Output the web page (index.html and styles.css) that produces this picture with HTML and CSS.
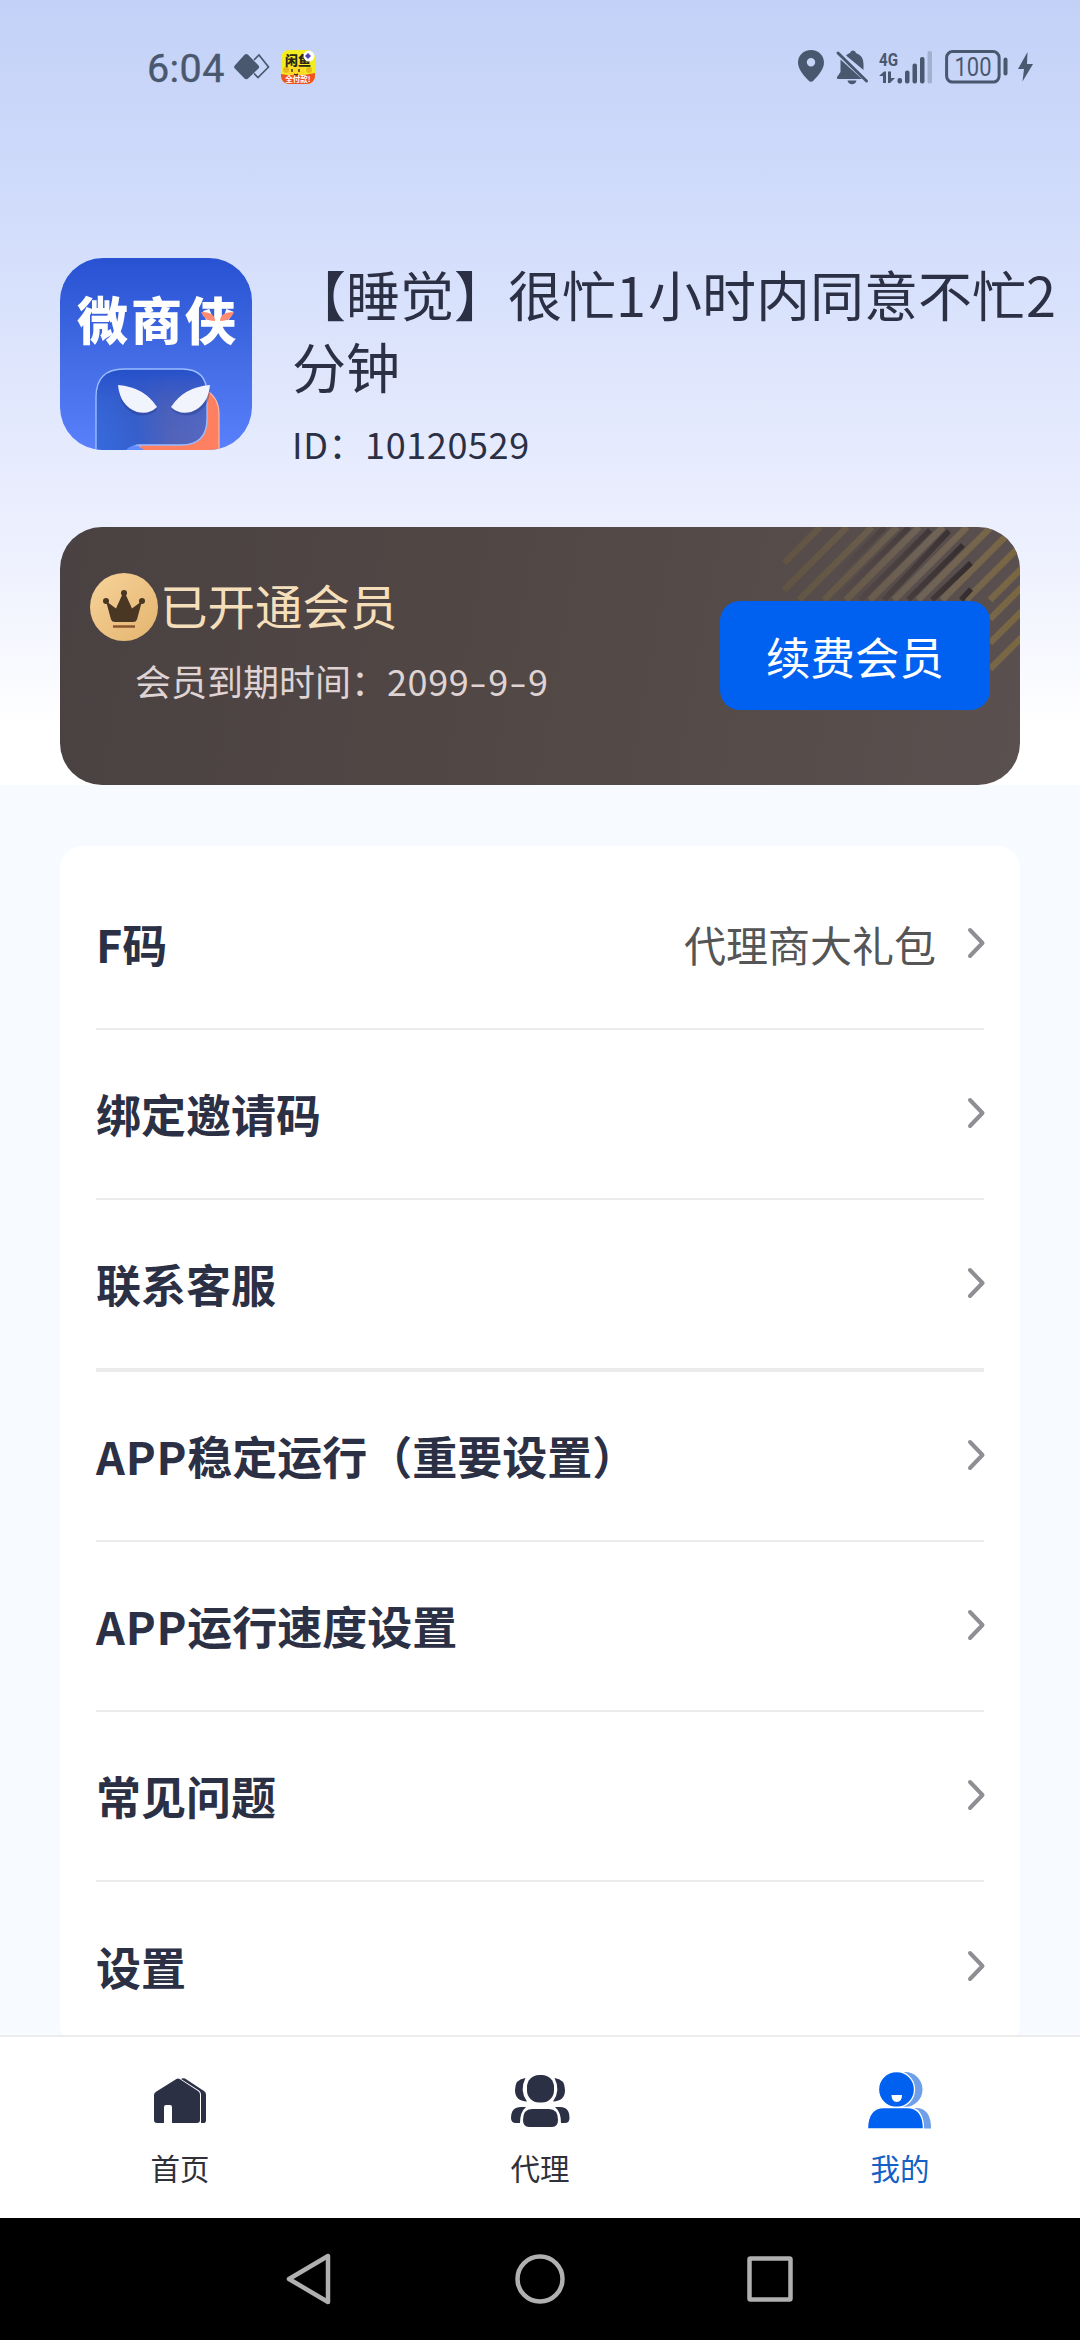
FILE: index.html
```html
<!DOCTYPE html>
<html lang="zh-CN">
<head>
<meta charset="utf-8">
<title>我的</title>
<link rel="stylesheet" href="styles.css">
</head>
<body>
<div class="screen">
  <main class="content">
    <section class="hero">
      <header class="status">
        <div class="status-left">
          <span class="clock">6:04</span>
          <svg class="diamonds" width="36" height="28" viewBox="0 0 36 28"><path d="M20 7l5-5 9.500 12L24 24.500l-4-4" fill="none" stroke="#4a586f" stroke-width="1.700"/><path d="M10.500 1.800q1.800-1.600 3.600 0L24.500 12.500q1.400 1.500 0 3L14.100 25.500q-1.800 1.600-3.600 0L.8 15.500q-1.400-1.500 0-3z" fill="#4a586f"/></svg>
          <svg class="appicon" width="34" height="34" viewBox="0 0 34 34">
            <defs><clipPath id="ai"><rect width="34" height="34" rx="8"/></clipPath></defs>
            <g clip-path="url(#ai)"><rect width="34" height="34" fill="#f3ec20"/><ellipse cx="15" cy="21" rx="9" ry="7" fill="#ffd928"/><circle cx="5" cy="20" r="3" fill="#e9b81c"/><circle cx="28" cy="20" r="3" fill="#e9b81c"/><path d="M0 24q17 3 34-1v11H0z" fill="#ee5422"/>
            <text x="17" y="15" text-anchor="middle" class="ai-a">闲鱼</text><text x="17" y="32" text-anchor="middle" class="ai-b">全付款!</text>
            <path d="M11 19v3M18 19v3M13 24q2 1.500 4 0" stroke="#3c3010" stroke-width="1.400" fill="none"/><circle cx="28" cy="6" r="5.500" fill="#fff"/><path d="M27 3l3 3-3 3-3-3z" fill="#5140b4"/></g>
          </svg>
        </div>
        <div class="status-right">
          <svg width="26" height="32" viewBox="0 0 26 32"><path fill-rule="evenodd" d="M13 0C5.500 0 0 5.500 0 12.500 0 19 5.500 25.500 10.500 30.500q2.500 2.500 5 0C20.500 25.500 26 19 26 12.500 26 5.500 20.500 0 13 0zm0 8a4.200 4.200 0 1 1 0 8.400 4.200 4.200 0 0 1 0-8.400z" fill="#4a586f"/></svg>
          <svg class="bell" width="33" height="35" viewBox="0 0 33 35"><g fill="#4a586f"><path d="M4.500 9.500L26 29H2.500Q0 29 1.200 26.800L4.500 22z"/><path d="M10 5.500Q12.500 3.300 14 3q.5-2.500 3-2.500T20 3q7.500 2.500 7.500 11v6z"/><path d="M11.500 30.500h9q-1 3.800-4.500 3.800t-4.500-3.800z"/></g><path d="M2 3l28.500 28" stroke="#4a586f" stroke-width="3" stroke-linecap="round"/></svg>
          <svg class="signal" width="54" height="36" viewBox="0 0 54 36"><text x="0" y="16" class="net" textLength="19" lengthAdjust="spacingAndGlyphs">4G</text><g fill="#4a586f"><path d="M0 26l5-4.500h2V33H4v-7zM9 21.500h3V28h4l-5 5H9z"/><rect x="18.500" y="28" width="4.500" height="5.500" rx="2"/><rect x="26" y="20.500" width="4.500" height="13" rx="2"/><rect x="33.500" y="13.500" width="4.500" height="20" rx="2"/><rect x="41" y="7" width="4.500" height="26.500" rx="2"/></g><rect x="48.500" y="1" width="4.500" height="32.500" rx="2" fill="#a2b0cf"/></svg>
          <svg class="battery" width="64" height="34" viewBox="0 0 64 34"><rect x="1.600" y="1.600" width="52.500" height="30.500" rx="6" fill="none" stroke="#4a586f" stroke-width="3"/><path d="M60.500 9.500v14" stroke="#4a586f" stroke-width="4" stroke-linecap="round"/><text x="28" y="25.500" text-anchor="middle" class="pct" textLength="37" lengthAdjust="spacingAndGlyphs">100</text></svg>
          <svg class="bolt" width="15" height="30" viewBox="0 0 15 30"><path d="M9.500 0L0 17h6L4.500 29.500 15 12H9z" fill="#4a586f"/></svg>
        </div>
      </header>

      <div class="profile">
        <svg class="avatar" width="192" height="192" viewBox="0 0 192 192">
          <defs>
            <linearGradient id="bg" x1="0" y1="0" x2="0" y2="1"><stop offset="0" stop-color="#2852d2"/><stop offset=".55" stop-color="#446de6"/><stop offset="1" stop-color="#5a80fc"/></linearGradient>
            <linearGradient id="face" x1="0" y1=".1" x2="1" y2="0"><stop offset="0" stop-color="#3568dc"/><stop offset=".3" stop-color="#345fcd"/><stop offset=".6" stop-color="#5263b8"/><stop offset="1" stop-color="#586ac6"/></linearGradient>
            <linearGradient id="topface" x1="0" y1="0" x2="0" y2="1"><stop offset="0" stop-color="#2450cc"/><stop offset=".45" stop-color="#3458c4" stop-opacity=".3"/><stop offset="1" stop-color="#5264bc" stop-opacity="0"/></linearGradient>
            <clipPath id="av"><rect width="192" height="192" rx="43"/></clipPath>
          </defs>
          <g clip-path="url(#av)">
            <rect width="192" height="192" fill="url(#bg)"/>
            <path d="M146 132q13 8 13 24v37H80v-8l50-3z" fill="#ff8060" stroke="#ffb9aa" stroke-width="1.200"/>
            <path d="M36 194v-55q0-28 28-28h58q25 0 25 25v25q0 26-26 26H80q-8 0-12 7z" fill="url(#face)"/>
            <path d="M36 194v-55q0-28 28-28h58q25 0 25 25v25q0 26-26 26H80q-8 0-12 7z" fill="url(#topface)" stroke="#9bbcff" stroke-width="1.400"/>
            <path d="M66 192q8-9 18 0z" fill="#628cff"/>
            <g fill="#26388a" opacity=".4"><path d="M59 130q28 2 38 22-7 7-20 5-18-6-18-27z"/><path d="M150 130q-28 2-38 22 7 7 20 5 18-6 18-27z"/></g>
            <g fill="#f1f4fc"><path d="M58 127q26 2 39 22-8 8-20 5-17-6-19-27z"/><path d="M150 127q-26 2-39 22 8 8 20 5 17-6 19-27z"/></g>
            <text x="96.500" y="82" text-anchor="middle" class="brand" textLength="159">微商侠</text>
            <path d="M141 54q14 0 14 9-11 0-14-9zM174 54q-14 0-14 9 11 0 14-9z" fill="#ff8b70"/>
          </g>
        </svg>
        <div class="who">
          <h1 class="name">【睡觉】很忙<span class="one">1</span>小时内同意不忙2<br>分钟</h1>
          <p class="uid">ID：10120529</p>
        </div>
      </div>

      <div class="vip">
        <svg class="stripes" width="236" height="150" viewBox="0 0 236 150">
          <defs><linearGradient id="sg" gradientUnits="userSpaceOnUse" x1="0" y1="0" x2="236" y2="0"><stop offset="0" stop-color="#716038" stop-opacity=".4"/><stop offset=".6" stop-color="#75685a" stop-opacity=".8"/><stop offset="1" stop-color="#7a6740"/></linearGradient>
          <linearGradient id="dk" gradientUnits="userSpaceOnUse" x1="50" y1="0" x2="188" y2="0"><stop offset="0" stop-color="#3e3030" stop-opacity="0"/><stop offset="1" stop-color="#342c2e"/></linearGradient></defs>
          <path stroke="url(#sg)" stroke-width="6.500" fill="none" d="M0 36L36 0M0 63L63 0M15 73L88 0M40 73L113 0M62 73L135 0M86 73L159 0M110 73L183 0M134 73L207 0M158 73L231 0M182 73L240 15M206 73L240 39M206 92L240 58M206 116L240 82M206 142L240 108"/>
          <path stroke="url(#dk)" stroke-width="5.500" fill="none" d="M28 73L101 0M52 73L125 0M76 73L146 3M100 73L165 4M124 73L179 18M148 73L187 36M177 73L187 62"/>
        </svg>
        <div class="vip-info">
          <div class="vip-title"><svg width="68" height="68" viewBox="0 0 68 68"><defs><linearGradient id="gold" x1="0" y1="0" x2="1" y2="1"><stop offset="0" stop-color="#f8d39b"/><stop offset="1" stop-color="#e3b46e"/></linearGradient></defs><circle cx="34" cy="34" r="34" fill="url(#gold)"/><g fill="#493623"><circle cx="34" cy="20" r="3"/><circle cx="16" cy="28" r="3"/><circle cx="52" cy="28" r="3"/><path d="M16 28l10 7.500L33 20h2l7 15.500L52 28l-5 18.500Q46 49 43 49H25q-3 0-4-2.500z"/></g><path d="M23 53.500h22" stroke="#8a5431" stroke-width="2.500"/></svg><span class="vip-name">已开通会员</span></div>
          <p class="expiry">会员到期时间：<span class="date">2099<span class="dash">-</span>9<span class="dash">-</span>9</span></p>
        </div>
        <button class="renew">续费会员</button>
      </div>
    </section>

    <section class="menu">
      <div class="row"><span class="label">F码</span><span class="value">代理商大礼包</span><svg class="chev" width="20" height="32" viewBox="0 0 20 32"><path d="M4 3l12.500 13L4 29"/></svg></div>
      <div class="row"><span class="label">绑定邀请码</span><svg class="chev" width="20" height="32" viewBox="0 0 20 32"><path d="M4 3l12.500 13L4 29"/></svg></div>
      <div class="row thick"><span class="label">联系客服</span><svg class="chev" width="20" height="32" viewBox="0 0 20 32"><path d="M4 3l12.500 13L4 29"/></svg></div>
      <div class="row"><span class="label"><span class="latin">APP</span>稳定运行（重要设置）</span><svg class="chev" width="20" height="32" viewBox="0 0 20 32"><path d="M4 3l12.500 13L4 29"/></svg></div>
      <div class="row"><span class="label"><span class="latin">APP</span>运行速度设置</span><svg class="chev" width="20" height="32" viewBox="0 0 20 32"><path d="M4 3l12.500 13L4 29"/></svg></div>
      <div class="row"><span class="label">常见问题</span><svg class="chev" width="20" height="32" viewBox="0 0 20 32"><path d="M4 3l12.500 13L4 29"/></svg></div>
      <div class="row"><span class="label">设置</span><svg class="chev" width="20" height="32" viewBox="0 0 20 32"><path d="M4 3l12.500 13L4 29"/></svg></div>
    </section>
  </main>

  <nav class="tabs">
    <div class="tab"><svg width="64" height="60" viewBox="0 0 64 60"><g fill="#2c3045"><path d="M6 24q0-2 2-3.200L28 8.200q2-1.200 4 0L50 20q2 1.400 2 3.500V49q0 3-3 3H24V36q0-2-2-2h-4q-2 0-2 2v16H9q-3 0-3-3z"/><path d="M33 8l2-.8q1-.2 2 .4L56 20q2 1.300 2 3.500V49q0 3-2 3h-3V23.500q0-2.500-2-4z"/></g></svg><span>首页</span></div>
    <div class="tab"><svg width="64" height="60" viewBox="0 0 64 60"><g fill="#2c3045"><rect x="19" y="4" width="27" height="27.500" rx="12"/><path d="M17.500 7Q7 8 7 19q0 11 12 11.500-8-11-1.500-23.500zM46.500 7Q57 8 57 19q0 11-12 11.500 8-11 1.500-23.500z"/><path d="M24 38h17q9 0 9 11 0 7-6 7H21q-6 0-6-7 0-11 9-11z"/><path d="M13 36h5q-6 5-6 16H8q-5 0-5-5 0-11 10-11zM52 36h-5q6 5 6 16h4q4.500 0 4.500-5 0-11-9.500-11z"/></g></svg><span>代理</span></div>
    <div class="tab active"><svg width="64" height="60" viewBox="0 0 64 60"><g fill="#6f9fe9"><circle cx="37" cy="18.500" r="17.500"/><path d="M40 37h8q15 0 15 20.500H40z"/></g><g fill="#0061f0" stroke="#fff" stroke-width="1.300"><circle cx="28.500" cy="18.500" r="18"/><path d="M-.5 58Q-.5 36.500 16 36.500h23q16.500 0 16.500 21.500z"/></g><path d="M23.500 24h10.500q0 7-5.200 7t-5.300-7z" fill="#fff"/></svg><span>我的</span></div>
  </nav>

  <div class="sysnav">
    <svg width="46" height="54" viewBox="0 0 46 54"><path d="M42 4v46L3 27z"/></svg>
    <svg width="54" height="54" viewBox="0 0 54 54"><circle cx="27" cy="27" r="22.500"/></svg>
    <svg width="46" height="54" viewBox="0 0 46 54"><rect x="2.500" y="6.500" width="41" height="41" rx="1"/></svg>
  </div>
</div>
</body>
</html>
```
FILE: styles.css
```css
* { box-sizing: border-box; margin: 0; padding: 0; }
body {
  width: 1080px; height: 2340px; overflow: hidden;
  font-family: "Noto Sans CJK SC", "Noto Sans", sans-serif;
  color: #2c3045; background: #f7fbff;
  text-spacing-trim: space-all;
}
svg { display: block; flex: none; overflow: visible; }
.screen { display: flex; flex-direction: column; height: 2340px; }
.content { flex: 1; min-height: 0; overflow: hidden; }
.hero {
  height: 785px;
  padding: 0 60px;
  background: linear-gradient(#c3d1f8 0, #d2ddfb 220px, #e3e9fd 420px, #eef1fe 560px, #ffffff 730px);
}

.status { display: flex; justify-content: space-between; height: 258px; margin: 0 -60px; padding: 49px 47px 0 147px; }
.status-left, .status-right { display: flex; align-items: flex-start; }
.clock { font: 400 39.5px/39px Roboto, sans-serif; color: #4a586f; width: 87px; letter-spacing: .4px; -webkit-text-stroke: .4px #4a586f; }
.diamonds { margin-top: 4px; }
.appicon { margin: 1px 0 0 11px; }
.status-right { padding-top: 1px; }
.bell { margin-left: 12px; }
.signal { margin: 0 0 0 10px; }
.battery { margin-left: 12px; }
.bolt { margin: 2px 0 0 9px; }
.net { font: 700 19px Roboto, sans-serif; fill: #4a586f; }
.pct { font: 400 25px Roboto, sans-serif; fill: #4a586f; }
.ai-a { font: 900 13px "Noto Sans CJK SC", sans-serif; fill: #2c2815; }
.ai-b { font: 700 7.500px "Noto Sans CJK SC", sans-serif; fill: #fff; }
.brand { font: 900 51px "Noto Sans CJK SC", sans-serif; fill: #fff; }

.profile { display: flex; gap: 40px; height: 269px; margin-right: -60px; }
.who { white-space: nowrap; }
.name { font-size: 54px; font-weight: 400; line-height: 72px; }
.one { letter-spacing: 2px; }
.uid { margin-top: 17px; font-size: 36px; line-height: 48px; letter-spacing: .6px; }

.vip {
  position: relative; display: flex; justify-content: space-between;
  height: 258px; border-radius: 42px; padding: 46px 30px 0; overflow: hidden;
  background: linear-gradient(100deg, #4a4142, #514745 45%, #5a504f);
}
.stripes { position: absolute; top: 0; right: 0; }
.vip-title { display: flex; align-items: center; gap: 2px; font-size: 47.5px; line-height: 68px; color: #f5dfbb; }
.vip-name { padding-bottom: 5px; line-height: 63px; }
.expiry { padding-left: 45px; margin-top: 12px; font-size: 36px; line-height: 54px; color: #dfd3d3; }
.date { letter-spacing: .6px; }
.dash { display: inline-block; width: 19px; text-align: center; transform: scaleX(1.4); }
.renew {
  position: relative; width: 270px; height: 109px; margin-top: 28px; border: 0; border-radius: 20px;
  background: #0061f0; color: #fff; font: 400 44.5px/60px "Noto Sans CJK SC", sans-serif;
}

.menu { margin: 61px 60px 0; padding: 12px 36px 0; height: 1200px; background: #fff; border-radius: 22px; }
.row { display: flex; align-items: center; height: 172px; border-bottom: 2px solid #ebebeb; margin-bottom: -2px; }
.row.thick { height: 174px; border-bottom-width: 4px; }
.row:last-child { border: 0; }
.label { flex: 1; font-size: 45px; font-weight: 700; line-height: 60px; padding-top: 2px; }
.latin { letter-spacing: .8px; }
.value { font-size: 42px; line-height: 60px; color: #555; padding-top: 1px; margin-right: 29px; }
.chev { margin: 0 -2px 0 1px; fill: none; stroke: #8e8e93; stroke-width: 4; stroke-linecap: round; stroke-linejoin: round; }

.tabs { display: flex; height: 183px; background: #fff; border-top: 2px solid #ececec; }
.tab { flex: 1; display: flex; flex-direction: column; align-items: center; padding-top: 34px; font-size: 29.5px; line-height: 44px; gap: 14px; color: #303038; }
.tab.active { color: #1560c4; }
.sysnav { display: flex; justify-content: space-between; align-items: center; height: 122px; background: #000; padding: 0 287px 0 286px; }
.sysnav svg { fill: none; stroke: #b0b0b0; stroke-width: 4.500; stroke-linejoin: round; }
```
